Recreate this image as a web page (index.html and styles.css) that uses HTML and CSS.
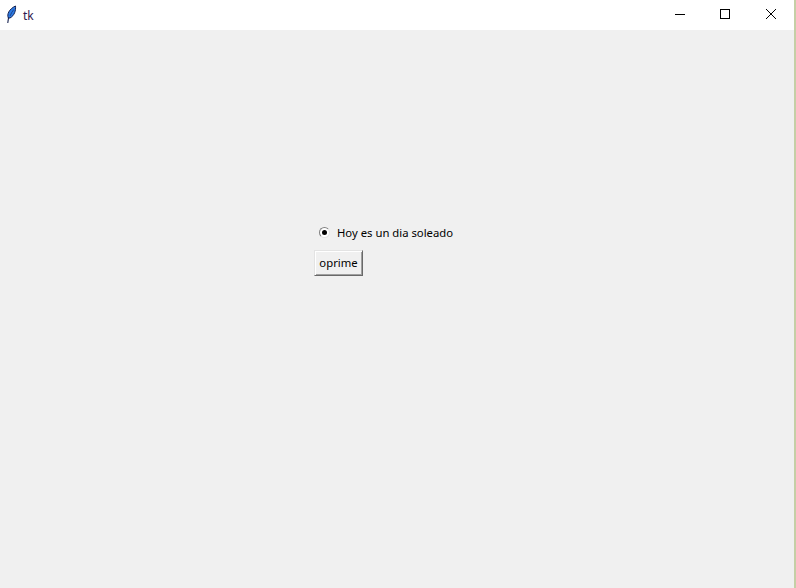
FILE: index.html
```html
<!DOCTYPE html>
<html lang="en">
<head>
    <meta charset="UTF-8">
    <meta name="viewport" content="width=device-width, initial-scale=1.0">
    <title>tk</title>
    <link rel="stylesheet" href="styles.css">
</head>
<body>

    <div class="window">
        <header class="titlebar">
            <div class="title">
                <svg class="feather" width="12" height="20" viewBox="0 0 12 20">
                    <path d="M2.8 18 L3.6 12" stroke="#14204f" stroke-width="1.1" fill="none"/>
                    <path d="M3.4 13 C1.6 9.5 4 4 10.5 1 C11 5.5 9.5 10.5 5 13 Z" fill="#2c7be5" stroke="#14204f" stroke-width="1"/>
                    <path d="M5 11 C6 8.5 7.2 6.5 8.8 4.5" stroke="#14204f" stroke-width="0.6" fill="none"/>
                </svg>
                <span class="title-text">tk</span>
            </div>
            <div class="controls">
                <span class="control control-min">
                    <svg width="12" height="12" viewBox="0 0 12 12"><path d="M1 6.5 H11" stroke="#000" stroke-width="1"/></svg>
                </span>
                <span class="control">
                    <svg width="12" height="12" viewBox="0 0 12 12"><rect x="1.5" y="1.5" width="9" height="9" fill="none" stroke="#000" stroke-width="1"/></svg>
                </span>
                <span class="control">
                    <svg width="12" height="12" viewBox="0 0 12 12"><path d="M1 1 L11 11 M11 1 L1 11" stroke="#000" stroke-width="1"/></svg>
                </span>
            </div>
        </header>

        <main class="content">
            <label class="radio-row">
                <span class="radio"><span class="radio-dot"></span></span>
                <span>Hoy es un dia soleado</span>
            </label>
            <button class="btn">oprime</button>
        </main>
    </div>

</body>
</html>
```

FILE: styles.css
```css
* {
    margin: 0;
    padding: 0;
    box-sizing: border-box;
}

html, body {
    height: 100%;
    overflow: hidden;
}

body {
    font-family: 'Noto Sans', 'Open Sans', sans-serif;
    font-size: 11.3px;
    color: #000;
    background-color: #f0f0f0;
}

.window {
    height: 588px;
    display: flex;
    flex-direction: column;
    border-right: 2px solid #c5cfa6;
}

.titlebar {
    height: 30px;
    flex-shrink: 0;
    display: flex;
    justify-content: space-between;
    background-color: #fff;
}

.title {
    display: flex;
    align-items: center;
    padding-left: 5px;
}

.feather {
    margin-top: -1px;
}

.title-text {
    margin-left: 6px;
    font-size: 12px;
    color: #2f1a4f;
}

.controls {
    display: flex;
}

.control {
    width: 46px;
    display: flex;
    align-items: center;
    justify-content: center;
    padding-bottom: 2px;
}

.control-min {
    width: 44px;
}

.content {
    flex: 1;
    display: flex;
    flex-direction: column;
    align-items: flex-start;
    padding: 192px 0 0 314px;
    background-color: #f0f0f0;
}

.radio-row {
    display: flex;
    align-items: center;
    height: 20px;
    padding-left: 5px;
    gap: 7px;
}

.radio {
    width: 11px;
    height: 11px;
    margin-top: 1px;
    border-radius: 50%;
    background-color: #fff;
    border: 1px solid;
    border-color: #808080 #e3e3e3 #e3e3e3 #808080;
    display: flex;
    align-items: center;
    justify-content: center;
}

.radio-dot {
    width: 5px;
    height: 5px;
    border-radius: 50%;
    background-color: #000;
}

.btn {
    margin-top: 8px;
    width: 49px;
    height: 26px;
    padding-bottom: 2px;
    font-family: inherit;
    font-size: 11.3px;
    color: #000;
    background-color: #f0f0f0;
    border: 1px solid;
    border-color: #e3e3e3 #696969 #696969 #e3e3e3;
    box-shadow: inset 1px 1px 0 #fff, inset -1px -1px 0 #a0a0a0;
}
```
